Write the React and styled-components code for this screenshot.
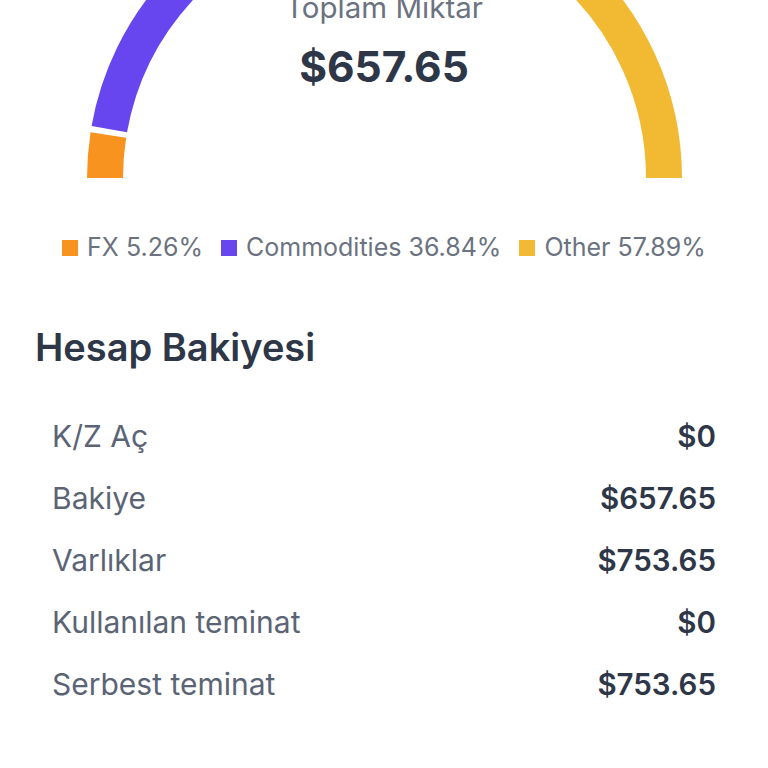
import React from 'react';
import styled, { createGlobalStyle } from 'styled-components';

const GlobalStyle = createGlobalStyle`
  html, body {
    margin: 0;
    padding: 0;
    background: #ffffff;
    font-family: Inter, "Noto Sans", sans-serif;
  }
`;

const Page = styled.div`
  width: 768px;
  height: 768px;
  overflow: hidden;
  background: #ffffff;
`;

const GaugeWrap = styled.div`
  display: grid;
  height: 178px;
  overflow: hidden;

  & > * {
    grid-area: 1 / 1;
  }
`;

const GaugeSvg = styled.svg`
  display: block;
  width: 768px;
  height: 178px;
`;

const Center = styled.div`
  display: flex;
  flex-direction: column;
  align-items: center;
  margin-top: -10px;
`;

const CenterLabel = styled.div`
  font-size: 29.5px;
  line-height: 34px;
  color: #6b7280;
`;

const CenterValue = styled.div`
  margin-top: 19px;
  font-size: 42.5px;
  line-height: 48px;
  font-weight: 700;
  color: #2e3748;
`;

const Legend = styled.div`
  display: flex;
  justify-content: center;
  align-items: center;
  gap: 18px;
  margin-top: 55px;
`;

const LegendItem = styled.div`
  display: flex;
  align-items: center;
  gap: 9px;
  font-size: 25px;
  line-height: 29px;
  color: #6b7280;
`;

const Swatch = styled.span`
  width: 16px;
  height: 16px;
  background: ${(p) => p.color};
`;

const Heading = styled.h2`
  margin: 62px 0 0;
  padding: 0 35px;
  font-size: 38px;
  line-height: 46px;
  font-weight: 600;
  color: #2d3748;
`;

const Rows = styled.div`
  display: flex;
  flex-direction: column;
  padding: 0 52px;
  margin-top: 35px;
`;

const Row = styled.div`
  display: flex;
  justify-content: space-between;
  align-items: center;
  height: 62px;
  font-size: 30px;
`;

const Label = styled.span`
  color: #5b6475;
`;

const Value = styled.span`
  font-size: 29.5px;
  font-weight: 600;
  color: #2e3748;
`;

const segments = [
  { name: 'FX', pct: 5.26, color: '#f7931e' },
  { name: 'Commodities', pct: 36.84, color: '#6746ef' },
  { name: 'Other', pct: 57.89, color: '#f2b933' },
];

const rows = [
  ['K/Z Aç', '$0'],
  ['Bakiye', '$657.65'],
  ['Varlıklar', '$753.65'],
  ['Kullanılan teminat', '$0'],
  ['Serbest teminat', '$753.65'],
];

function arc(cx, cy, r, a0, a1) {
  // angles in degrees, 180 = left, 0 = right, drawn over the top
  const p = (a) => [cx + r * Math.cos((a * Math.PI) / 180), cy - r * Math.sin((a * Math.PI) / 180)];
  const [x0, y0] = p(a0);
  const [x1, y1] = p(a1);
  const large = Math.abs(a0 - a1) > 180 ? 1 : 0;
  return `M ${x0} ${y0} A ${r} ${r} 0 ${large} 1 ${x1} ${y1}`;
}

function Gauge() {
  const cx = 384.5;
  const cy = 178;
  const r = 279.5;
  const gap = 0.6;
  let start = 180;
  const paths = segments.map((s, i) => {
    const sweep = (s.pct / 100) * 180;
    const a0 = start - (i === 0 ? 0 : gap);
    const a1 = start - sweep + (i === segments.length - 1 ? 0 : gap);
    start -= sweep;
    return <path key={s.name} d={arc(cx, cy, r, a0, a1)} stroke={s.color} strokeWidth="36" fill="none" />;
  });
  return (
    <GaugeSvg viewBox="0 0 768 178">
      {paths}
    </GaugeSvg>
  );
}

export default function App() {
  return (
    <Page>
      <GlobalStyle />
      <GaugeWrap>
        <Gauge />
        <Center>
          <CenterLabel>Toplam Miktar</CenterLabel>
          <CenterValue>$657.65</CenterValue>
        </Center>
      </GaugeWrap>
      <Legend>
        {segments.map((s) => (
          <LegendItem key={s.name}>
            <Swatch color={s.color} />
            {s.name} {s.pct.toFixed(2)}%
          </LegendItem>
        ))}
      </Legend>
      <Heading>Hesap Bakiyesi</Heading>
      <Rows>
        {rows.map(([k, v]) => (
          <Row key={k}>
            <Label>{k}</Label>
            <Value>{v}</Value>
          </Row>
        ))}
      </Rows>
    </Page>
  );
}
